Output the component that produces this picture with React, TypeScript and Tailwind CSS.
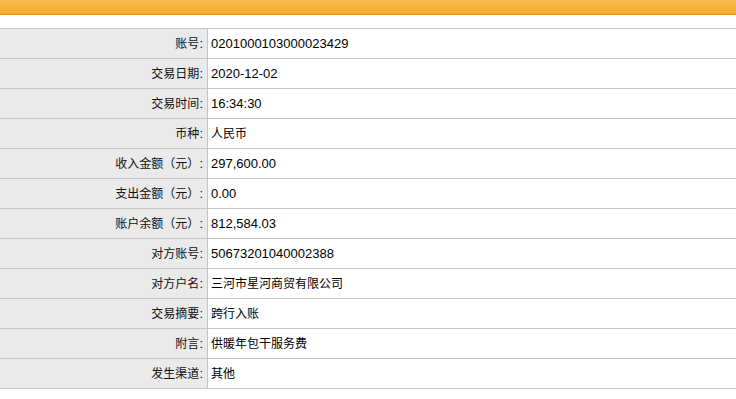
import React from "react";

const rows: [string, string][] = [
  ["账号:", "0201000103000023429"],
  ["交易日期:", "2020-12-02"],
  ["交易时间:", "16:34:30"],
  ["币种:", "人民币"],
  ["收入金额（元）:", "297,600.00"],
  ["支出金额（元）:", "0.00"],
  ["账户余额（元）:", "812,584.03"],
  ["对方账号:", "50673201040002388"],
  ["对方户名:", "三河市星河商贸有限公司"],
  ["交易摘要:", "跨行入账"],
  ["附言:", "供暖年包干服务费"],
  ["发生渠道:", "其他"],
];

function Mixed({ text }: { text: string }) {
  const parts = text.match(/[\u3000-\u9fff\uff00-\uffef]+|[^\u3000-\u9fff\uff00-\uffef]+/g) || [];
  return (
    <span className="whitespace-nowrap">
      {parts.map((p, i) =>
        /[\u3000-\u9fff\uff00-\uffef]/.test(p) ? (
          <span key={i} className="text-[12px]">{p}</span>
        ) : (
          <span key={i} className="text-[13px]">{p}</span>
        )
      )}
    </span>
  );
}

export default function App() {
  return (
    <div
      className="w-[736px] h-[399px] bg-white overflow-hidden text-[13px] leading-none text-[#111]"
      style={{ fontFamily: '"Liberation Sans", "Noto Sans CJK SC", sans-serif' }}
    >
      <div className="h-[15px] bg-gradient-to-b from-[#f9bc52] to-[#f5a82a] border-b border-[#e8961a]" />
      <div className="mt-[13px] border-t border-[#c4c4c4]">
        {rows.map(([k, v]) => (
          <div key={k} className="flex h-[30px] border-b border-[#c4c4c4]">
            <div className="w-[208px] bg-[#e9eae9] border-r border-[#c4c4c4] flex items-center justify-end pr-[4px] text-[#111]">
              <Mixed text={k} />
            </div>
            <div className="flex-1 flex items-center pl-[3px] text-[#000]">
              <Mixed text={v} />
            </div>
          </div>
        ))}
      </div>
    </div>
  );
}
